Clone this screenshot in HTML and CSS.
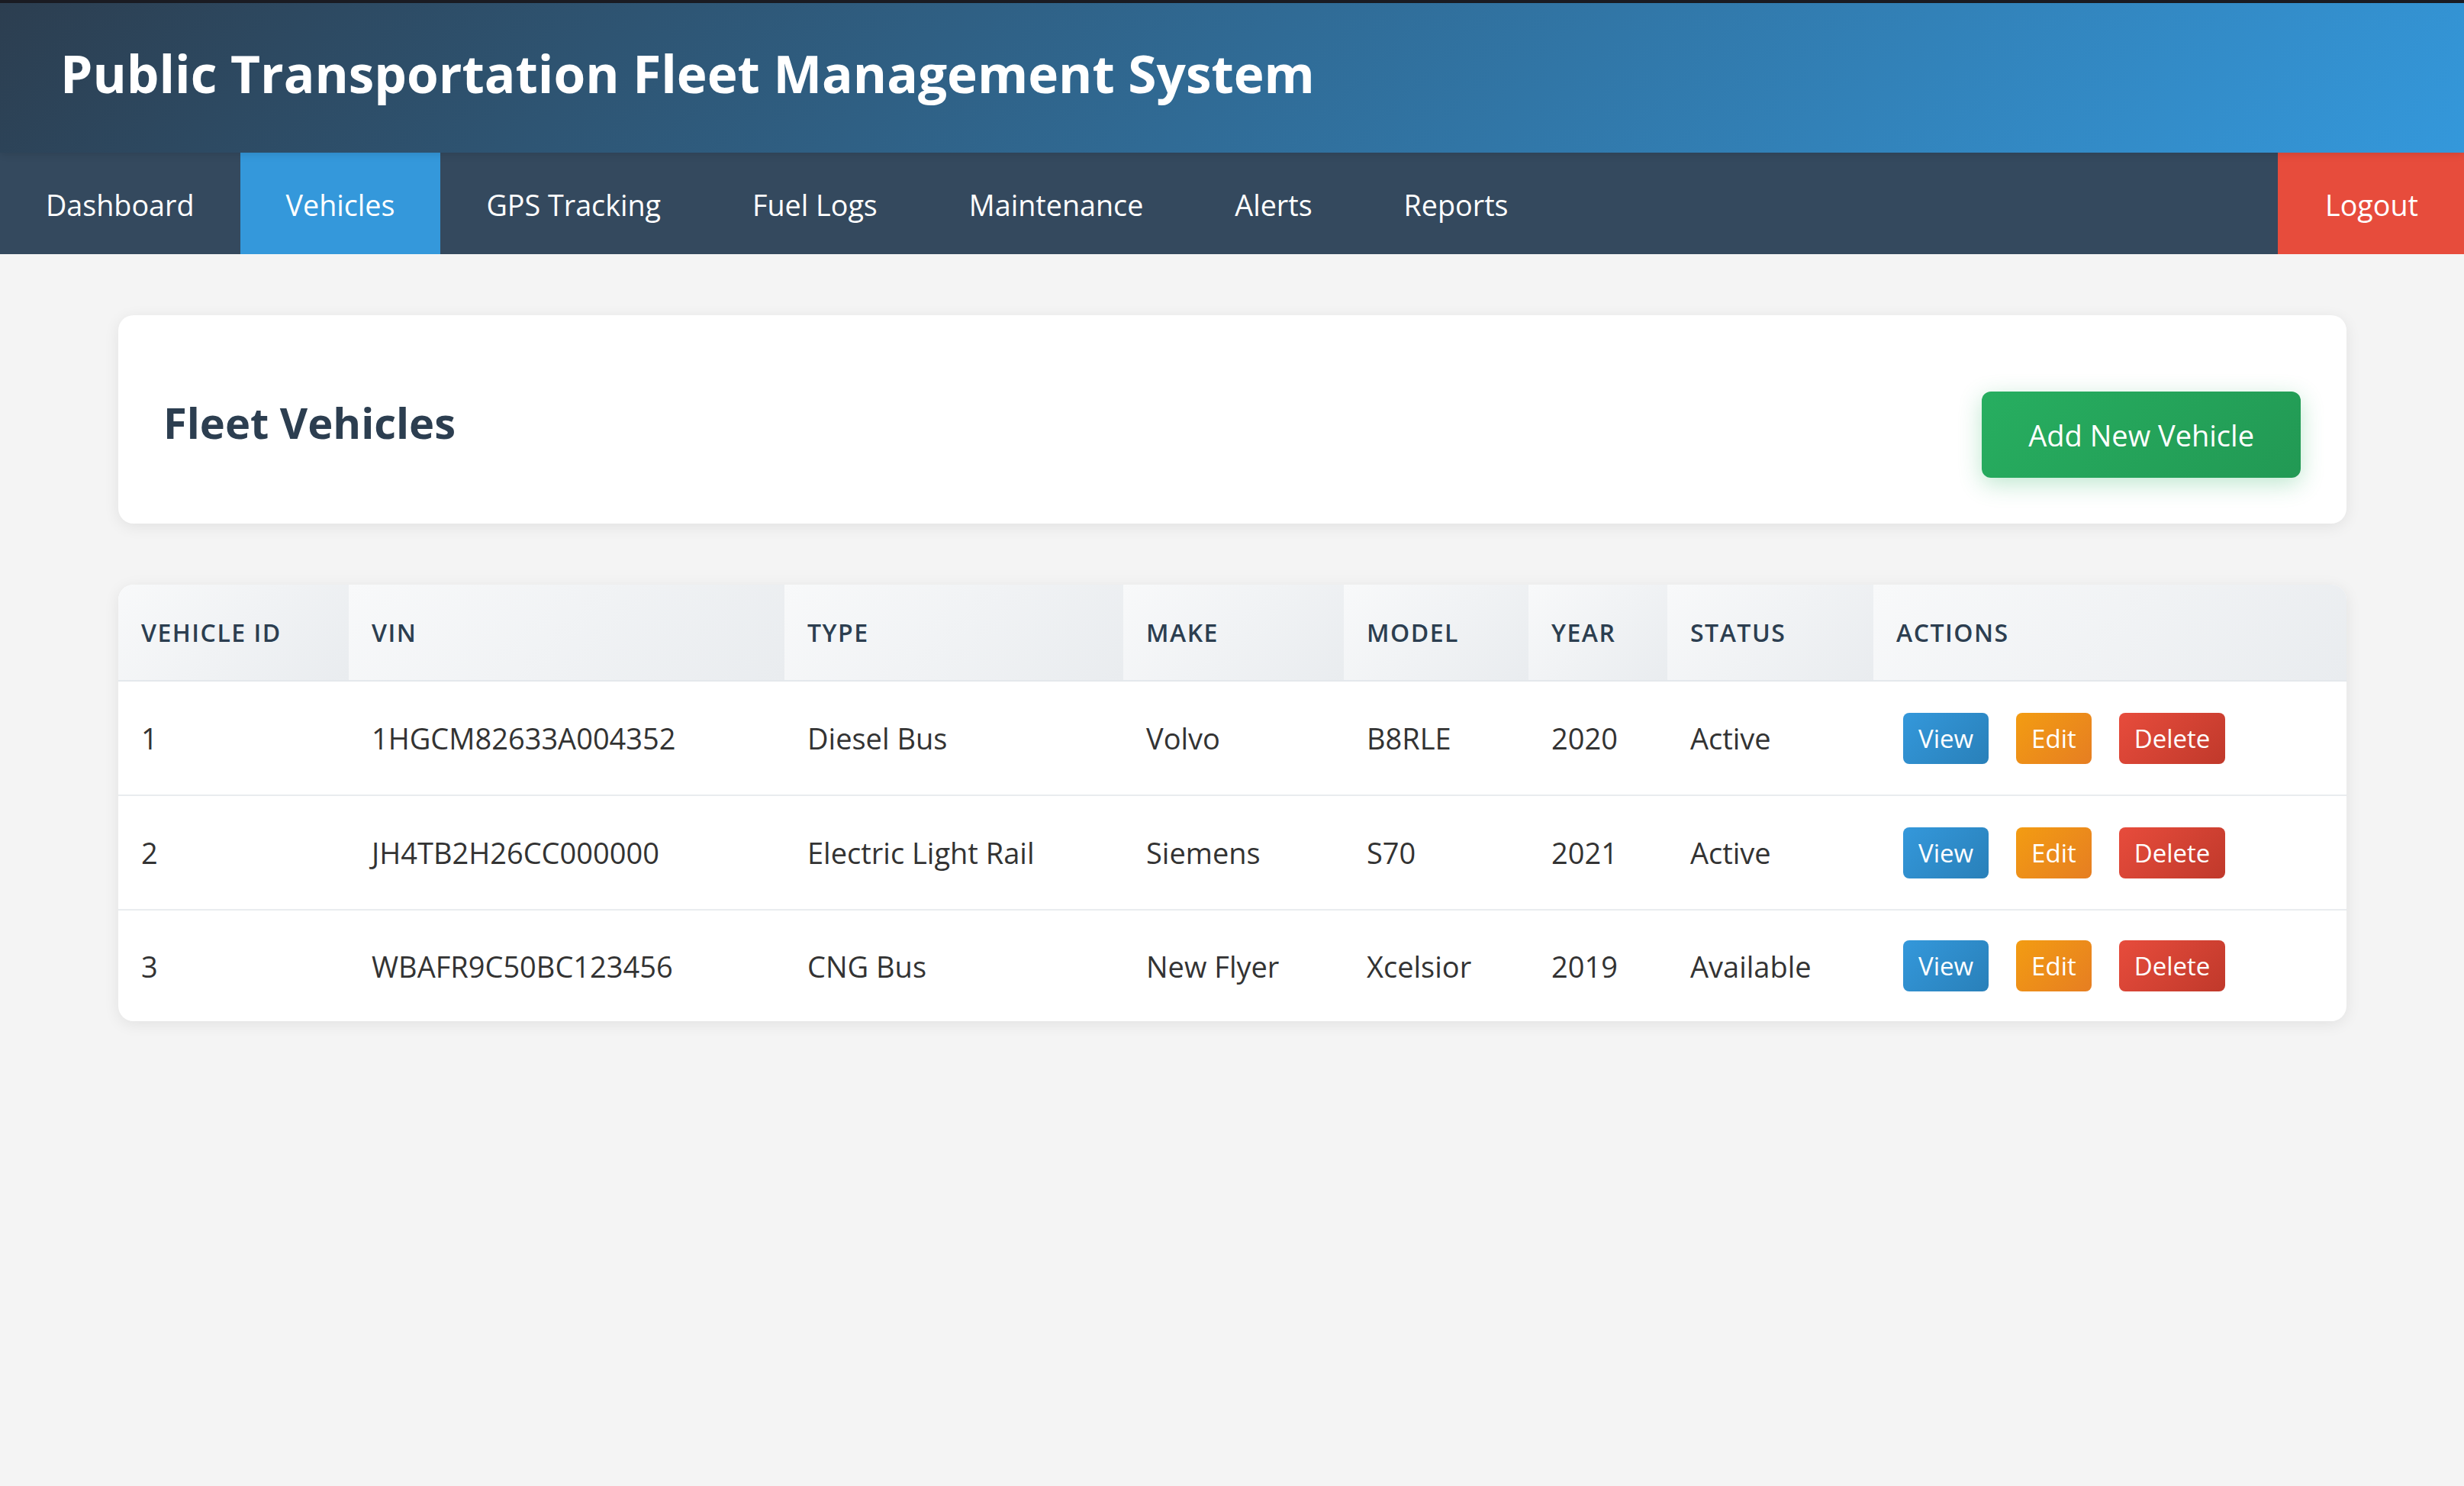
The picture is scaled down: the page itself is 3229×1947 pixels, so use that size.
FILE: index.html
```html
<!DOCTYPE html>
<html lang="en">
<head>
<meta charset="utf-8">
<title>Public Transportation Fleet Management System</title>
<link rel="stylesheet" href="styles.css">
</head>
<body>
<div class="topline"></div>
<header class="site-header">
  <h1 class="site-title">Public Transportation Fleet Management System</h1>
</header>
<nav class="main-nav">
  <ul class="nav-list">
    <li><a class="nav-link" href="#">Dashboard</a></li>
    <li><a class="nav-link active" href="#">Vehicles</a></li>
    <li><a class="nav-link" href="#">GPS Tracking</a></li>
    <li><a class="nav-link" href="#">Fuel Logs</a></li>
    <li><a class="nav-link" href="#">Maintenance</a></li>
    <li><a class="nav-link" href="#">Alerts</a></li>
    <li><a class="nav-link" href="#">Reports</a></li>
  </ul>
  <a class="nav-link logout" href="#">Logout</a>
</nav>
<main class="container">
  <section class="card page-head">
    <h2 class="page-title">Fleet Vehicles</h2>
    <button class="btn-add" type="button">Add New Vehicle</button>
  </section>
  <section class="card table-card">
    <table class="data-table">
      <colgroup>
        <col class="w-id"><col class="w-vin"><col class="w-type"><col class="w-make">
        <col class="w-model"><col class="w-year"><col class="w-status"><col class="w-actions">
      </colgroup>
      <thead>
        <tr>
          <th>Vehicle ID</th><th>VIN</th><th>Type</th><th>Make</th>
          <th>Model</th><th>Year</th><th>Status</th><th>Actions</th>
        </tr>
      </thead>
      <tbody>
        <tr>
          <td>1</td><td>1HGCM82633A004352</td><td>Diesel Bus</td><td>Volvo</td>
          <td>B8RLE</td><td>2020</td><td>Active</td>
          <td><div class="actions"><button class="btn-sm view" type="button">View</button><button class="btn-sm edit" type="button">Edit</button><button class="btn-sm delete" type="button">Delete</button></div></td>
        </tr>
        <tr>
          <td>2</td><td>JH4TB2H26CC000000</td><td>Electric Light Rail</td><td>Siemens</td>
          <td>S70</td><td>2021</td><td>Active</td>
          <td><div class="actions"><button class="btn-sm view" type="button">View</button><button class="btn-sm edit" type="button">Edit</button><button class="btn-sm delete" type="button">Delete</button></div></td>
        </tr>
        <tr>
          <td>3</td><td>WBAFR9C50BC123456</td><td>CNG Bus</td><td>New Flyer</td>
          <td>Xcelsior</td><td>2019</td><td>Available</td>
          <td><div class="actions"><button class="btn-sm view" type="button">View</button><button class="btn-sm edit" type="button">Edit</button><button class="btn-sm delete" type="button">Delete</button></div></td>
        </tr>
      </tbody>
    </table>
  </section>
</main>
</body>
</html>
```
FILE: styles.css
```css
* { box-sizing: border-box; }

body {
  margin: 0;
  background: #f4f4f4;
  font-family: "Open Sans", "Noto Sans", sans-serif;
  color: #333;
}

.topline {
  height: 4px;
  background: #1b1c23;
}

.site-header {
  position: relative;
  z-index: 1;
  height: 196px;
  padding: 0 0 11px 79px;
  display: flex;
  align-items: center;
  background: linear-gradient(135deg, #2c3e50 0%, #3498db 100%);
  box-shadow: 0 2px 10px rgba(0, 0, 0, 0.12);
}

.site-title {
  margin: 0;
  color: #fff;
  font-size: 67.5px;
  font-weight: 700;
  line-height: 1;
}

.main-nav {
  display: flex;
  justify-content: space-between;
  background: #34495e;
  height: 133px;
}

.nav-list {
  display: flex;
  list-style: none;
  margin: 0;
  padding: 0;
}

.nav-link {
  display: flex;
  align-items: center;
  height: 133px;
  padding: 4px 60px 0 60px;
  color: #fff;
  font-size: 37.7px;
  text-decoration: none;
}

.nav-link.active { background: #3498db; }
.nav-link.logout { background: #e74c3c; padding: 4px 60px 0 62px; }

.container {
  padding: 80px 154px 80px 155px;
}

.card {
  background: #fff;
  border-radius: 20px;
  box-shadow: 0 4px 20px rgba(0, 0, 0, 0.08);
}

.page-head {
  display: flex;
  justify-content: space-between;
  align-items: flex-end;
  padding: 60px 60px 60px 59px;
  margin-bottom: 80px;
}

.page-title {
  margin: 52px 0 45px;
  color: #2c3e50;
  font-size: 56px;
  font-weight: 700;
  line-height: 1;
}

.btn-add {
  height: 113px;
  padding: 0 61px;
  border: none;
  border-radius: 12px;
  background: linear-gradient(135deg, #27ae60, #229954);
  box-shadow: 0 8px 30px rgba(39, 174, 96, 0.3);
  color: #fff;
  font-family: inherit;
  font-size: 38px;
}

.table-card { overflow: hidden; }

.data-table {
  width: 100%;
  border-collapse: collapse;
  table-layout: fixed;
}

.w-id { width: 302px; }
.w-vin { width: 571px; }
.w-type { width: 444px; }
.w-make { width: 289px; }
.w-model { width: 242px; }
.w-year { width: 182px; }
.w-status { width: 270px; }
.w-actions { width: 620px; }

.data-table th {
  height: 126px;
  padding: 0 30px;
  text-align: left;
  background: linear-gradient(135deg, #f8f9fa, #e9ecef);
  color: #2c3e50;
  font-size: 32px;
  font-weight: 600;
  text-transform: uppercase;
  letter-spacing: 1.5px;
  border-bottom: 2px solid #e4e8ec;
}

.data-table td {
  height: 150px;
  padding: 0 30px;
  border-bottom: 2px solid #e9ecef;
  color: #333;
  font-size: 38px;
  white-space: nowrap;
}

.data-table tbody tr:last-child td { border-bottom: none; height: 146px; }

.actions {
  display: flex;
  gap: 36px;
  padding-left: 9px;
}

.btn-sm {
  height: 67px;
  padding: 0 20px;
  border: none;
  border-radius: 8px;
  color: #fff;
  font-family: inherit;
  font-size: 33px;
}

.btn-sm.view { background: linear-gradient(135deg, #3498db, #2980b9); }
.btn-sm.edit { background: linear-gradient(135deg, #f39c12, #e67e22); }
.btn-sm.delete { background: linear-gradient(135deg, #e74c3c, #c0392b); }
```
